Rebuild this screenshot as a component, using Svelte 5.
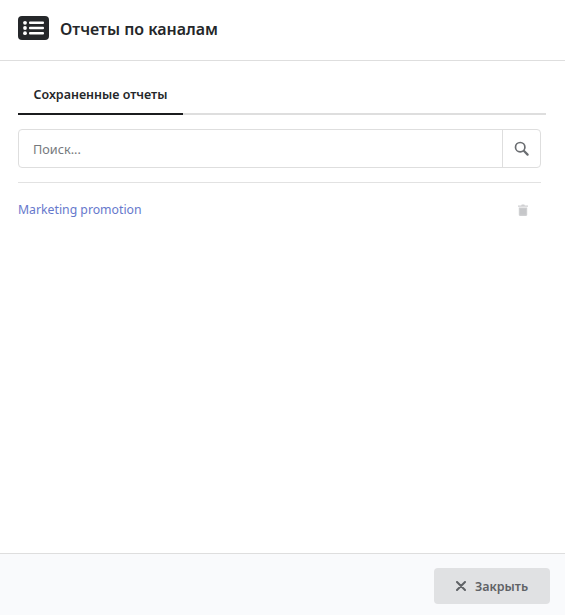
<script>
  let query = $state("");
  const reports = [{ id: 1, name: "Marketing promotion" }];
</script>

<div class="modal">
  <header class="head">
    <svg class="head-icon" width="31" height="24" viewBox="0 0 31 24">
      <rect x="0" y="0" width="31" height="24" rx="4" fill="#25272a" />
      <circle cx="7" cy="6.8" r="1.9" fill="#fff" />
      <circle cx="7" cy="12" r="1.9" fill="#fff" />
      <circle cx="7" cy="17.2" r="1.9" fill="#fff" />
      <rect x="11" y="5.6" width="15" height="2.4" rx="1" fill="#fff" />
      <rect x="11" y="10.8" width="15" height="2.4" rx="1" fill="#fff" />
      <rect x="11" y="16" width="15" height="2.4" rx="1" fill="#fff" />
    </svg>
    <h1>Отчеты по каналам</h1>
  </header>

  <main class="body">
    <div class="tabs">
      <div class="tab">Сохраненные отчеты</div>
    </div>

    <div class="search">
      <input type="text" placeholder="Поиск..." bind:value={query} />
      <button class="search-btn" aria-label="Поиск">
        <svg width="15" height="15" viewBox="0 0 15 15" fill="none" stroke="#6a6d71">
          <circle cx="6.2" cy="6.2" r="4.7" stroke-width="1.7" />
          <path d="M9.8 9.8 L13.6 13.6" stroke-width="2.2" stroke-linecap="round" />
        </svg>
      </button>
    </div>

    <ul class="list">
      {#each reports as r (r.id)}
        <li>
          <span class="link">{r.name}</span>
          <svg class="trash" width="10" height="12" viewBox="0 0 10 12">
            <path d="M0 1.6h3.2L3.7.5h2.6l.5 1.1H10v1.2H0z" fill="#cfd0d2" />
            <path d="M.8 3.4h8.4v7.4c0 .7-.5 1.2-1.2 1.2H2c-.7 0-1.2-.5-1.2-1.2z" fill="#cfd0d2" />
            <path d="M3 4.6v6M5 4.6v6M7 4.6v6" stroke="#b9babd" stroke-width=".8" />
          </svg>
        </li>
      {/each}
    </ul>
  </main>

  <footer class="foot">
    <button class="close">
      <svg width="10" height="10" viewBox="0 0 10 10" stroke="#5f6266" stroke-width="2" stroke-linecap="round">
        <path d="M1 1 L9 9 M9 1 L1 9" />
      </svg>
      <span>Закрыть</span>
    </button>
  </footer>
</div>

<style>
  :global(body) {
    margin: 0;
    background: #fff;
  }

  .modal {
    width: 565px;
    height: 615px;
    display: flex;
    flex-direction: column;
    font-family: "Noto Sans", "Open Sans", sans-serif;
    color: #25272a;
  }

  .head {
    height: 61px;
    box-sizing: border-box;
    border-bottom: 1px solid #dedede;
    display: flex;
    align-items: flex-start;
    padding: 16px 0 0 18px;
    gap: 11px;
  }

  .head h1 {
    margin: 0;
    font-size: 16px;
    line-height: 26px;
    font-weight: 600;
  }

  .body {
    flex: 1;
    padding: 16px 19px 0 18px;
    display: flex;
    flex-direction: column;
  }

  .tabs {
    border-bottom: 2px solid #dedede;
    height: 36px;
    display: flex;
  }

  .tab {
    width: 165px;
    height: 38px;
    box-sizing: border-box;
    border-bottom: 2px solid #1b1c1e;
    font-size: 12.5px;
    font-weight: 600;
    line-height: 35px;
    text-align: center;
    white-space: nowrap;
  }

  .search {
    margin-top: 14px;
    margin-right: 5px;
    height: 39px;
    box-sizing: border-box;
    border: 1px solid #dedede;
    border-radius: 4px;
    display: flex;
  }

  .search input {
    flex: 1;
    min-width: 0;
    border: 0;
    outline: 0;
    background: none;
    padding: 1px 14px 0;
    font: inherit;
    font-size: 12.7px;
  }

  .search input::placeholder {
    color: #76797d;
    opacity: 1;
  }

  .search-btn {
    width: 38px;
    padding: 0;
    border: 0;
    border-left: 1px solid #dedede;
    background: none;
    display: flex;
    align-items: center;
    justify-content: center;
  }

  .list {
    list-style: none;
    margin: 14px 5px 0 0;
    padding: 0;
    border-top: 1px solid #e2e2e2;
  }

  .list li {
    display: flex;
    align-items: center;
    justify-content: space-between;
    height: 54px;
    padding-right: 13px;
  }

  .link {
    color: #6678cc;
    font-size: 12.25px;
    position: relative;
    top: -1px;
  }

  .foot {
    height: 62px;
    box-sizing: border-box;
    border-top: 1px solid #dedede;
    background: #f9fafc;
    display: flex;
    justify-content: flex-end;
    align-items: flex-start;
    padding: 14px 15px 0 0;
  }

  .close {
    width: 116px;
    height: 36px;
    border: 0;
    border-radius: 4px;
    background: #e0e1e3;
    color: #5f6266;
    font: inherit;
    font-size: 12.5px;
    font-weight: 600;
    display: flex;
    align-items: center;
    justify-content: center;
    gap: 9px;
    padding: 0;
  }
</style>
